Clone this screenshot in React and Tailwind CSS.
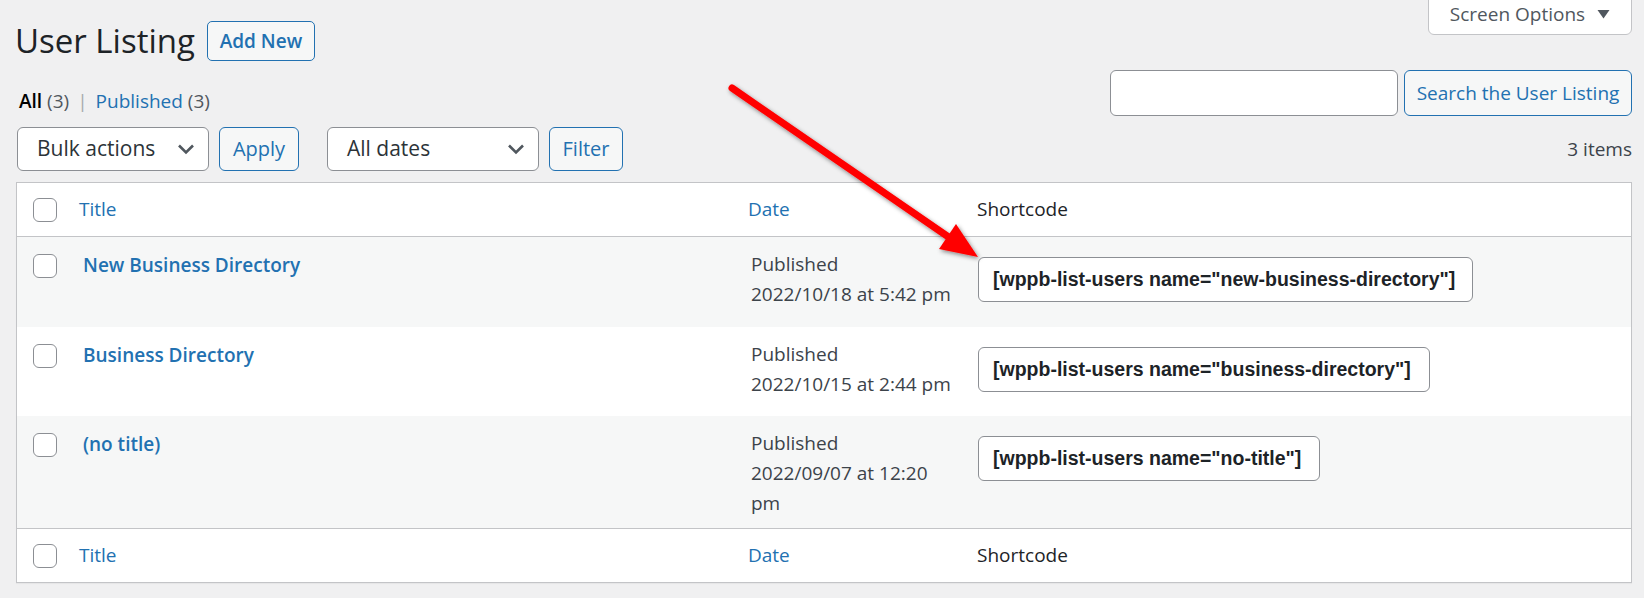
import React from "react";

const rows = [
  {
    title: "New Business Directory",
    date: "2022/10/18 at 5:42 pm",
    code: '[wppb-list-users name="new-business-directory"]',
    rowCls: "bg-[#f6f7f7] h-[90px]",
    inputCls: "w-[495px]",
  },
  {
    title: "Business Directory",
    date: "2022/10/15 at 2:44 pm",
    code: '[wppb-list-users name="business-directory"]',
    rowCls: "bg-white h-[89px]",
    inputCls: "w-[452px]",
  },
  {
    title: "(no title)",
    date: "2022/09/07 at 12:20 pm",
    code: '[wppb-list-users name="no-title"]',
    rowCls: "bg-[#f6f7f7] h-[112px]",
    inputCls: "w-[342px]",
  },
];

function Checkbox() {
  return (
    <span className="block w-[24px] h-[24px] rounded-[6px] border border-[#8c8f94] bg-white" />
  );
}

function Chevron() {
  return (
    <svg width="18" height="12" viewBox="0 0 18 12" className="text-[#50575e]">
      <path d="M2 2.5 L9 9.5 L16 2.5" fill="none" stroke="currentColor" strokeWidth="2.6" />
    </svg>
  );
}

function Select({ label, cls }) {
  return (
    <div
      className={`${cls} h-[44px] flex items-center justify-between pl-[19px] pr-[13px] bg-white border border-[#8c8f94] rounded-[6px] text-[21px] text-[#2c3338]`}
    >
      <span>{label}</span>
      <Chevron />
    </div>
  );
}

function HeadRow({ top }) {
  return (
    <div
      className={`flex items-center h-[54px] ${
        top ? "border-b" : "border-t"
      } border-[#c3c4c7]`}
    >
      <div className="w-[47px] pl-[16px]">
        <Checkbox />
      </div>
      <div className="w-[672px] pl-[15px] text-[#2271b1]">Title</div>
      <div className="w-[230px] pl-[12px] text-[#2271b1]">Date</div>
      <div className="flex-1 pl-[11px] text-[#1d2327]">Shortcode</div>
    </div>
  );
}

export default function App() {
  return (
    <div className="relative w-[1644px] h-[598px] overflow-hidden bg-[#f0f0f1] font-['Open_Sans',sans-serif] text-[19px] text-[#3c434a] pl-[16px] pr-[12px]">
      {/* title + screen options */}
      <div className="flex justify-between items-start">
        <div className="flex items-center mt-[21px] h-[40px]">
          <h1 className="text-[33px] leading-[40px] text-[#1d2327] ml-[-1px]">
            User Listing
          </h1>
          <button className="ml-[12px] h-[40px] w-[108px] border border-[#2271b1] rounded-[5px] bg-[#f6f7f7] text-[#2271b1] font-semibold text-[19px]">
            Add New
          </button>
        </div>
        <div className="mt-[-1px] w-[204px] h-[36px] flex items-center justify-center gap-[12px] pb-[6px] bg-white border border-[#c3c4c7] rounded-b-[6px] text-[#50575e] text-[19px]">
          <span>Screen Options</span>
          <svg width="13" height="10" viewBox="0 0 13 10">
            <path d="M0.5 1 L12.5 1 L6.5 9.5 Z" fill="#50575e" />
          </svg>
        </div>
      </div>

      {/* views + search */}
      <div className="flex justify-between mt-[9px] h-[46px]">
        <div className="mt-[16px] leading-[30px] ml-[3px]">
          <span className="font-semibold text-black">All</span>{" "}
          <span className="text-[#50575e]">(3)</span>
          <span className="text-[#a7aaad] mx-[8px]">|</span>
          <span className="text-[#2271b1]">Published</span>{" "}
          <span className="text-[#50575e]">(3)</span>
        </div>
        <div className="flex gap-[6px]">
          <div className="w-[288px] h-[46px] bg-white border border-[#8c8f94] rounded-[6px]" />
          <button className="w-[228px] h-[46px] border border-[#2271b1] rounded-[6px] bg-[#f6f7f7] text-[#2271b1] text-[19px]">
            Search the User Listing
          </button>
        </div>
      </div>

      {/* tablenav */}
      <div className="flex items-center mt-[11px] h-[44px] pl-[1px]">
        <Select label="Bulk actions" cls="w-[192px]" />
        <button className="ml-[10px] w-[80px] h-[44px] border border-[#2271b1] rounded-[6px] bg-[#f6f7f7] text-[#2271b1] text-[20px]">
          Apply
        </button>
        <Select label="All dates" cls="ml-[28px] w-[212px]" />
        <button className="ml-[10px] w-[74px] h-[44px] border border-[#2271b1] rounded-[6px] bg-[#f6f7f7] text-[#2271b1] text-[20px]">
          Filter
        </button>
        <span className="ml-auto text-[#3c434a]">3 items</span>
      </div>

      {/* table */}
      <div className="mt-[11px] bg-white border border-[#c3c4c7] shadow-[0_1px_1px_rgba(0,0,0,0.04)]">
        <HeadRow top />
        {rows.map((r, i) => (
          <div key={i} className={`flex items-start ${r.rowCls}`}>
            <div className="w-[47px] pl-[16px] pt-[17px]">
              <Checkbox />
            </div>
            <div className="w-[672px] pl-[19px] pt-[13px] leading-[30px] font-semibold text-[#2271b1]">
              {r.title}
            </div>
            <div className="w-[230px] pl-[15px] pt-[12px] leading-[30px]">
              <div>Published</div>
              <div className="w-[200px]">{r.date}</div>
            </div>
            <div className="flex-1 pl-[12px] pt-[20px]">
              <div
                className={`${r.inputCls} h-[45px] flex items-center pl-[14px] bg-white border border-[#8c8f94] rounded-[6px] font-['Liberation_Sans',Arial,sans-serif] font-bold text-[19.5px] text-[#1d2327] whitespace-nowrap`}
              >
                {r.code}
              </div>
            </div>
          </div>
        ))}
        <HeadRow />
      </div>

      {/* annotation arrow */}
      <svg
        className="absolute left-0 top-0 pointer-events-none"
        width="1644"
        height="598"
        viewBox="0 0 1644 598"
      >
        <defs>
          <filter id="sh" x="-20%" y="-20%" width="140%" height="140%">
            <feDropShadow dx="1.5" dy="2" stdDeviation="2" floodColor="#000" floodOpacity="0.45" />
          </filter>
        </defs>
        <g filter="url(#sh)">
          <line x1="732" y1="88" x2="950" y2="238" stroke="#ff0000" strokeWidth="7" strokeLinecap="round" />
          <polygon points="978,257 939,249 956,224" fill="#ff0000" />
        </g>
      </svg>
    </div>
  );
}
